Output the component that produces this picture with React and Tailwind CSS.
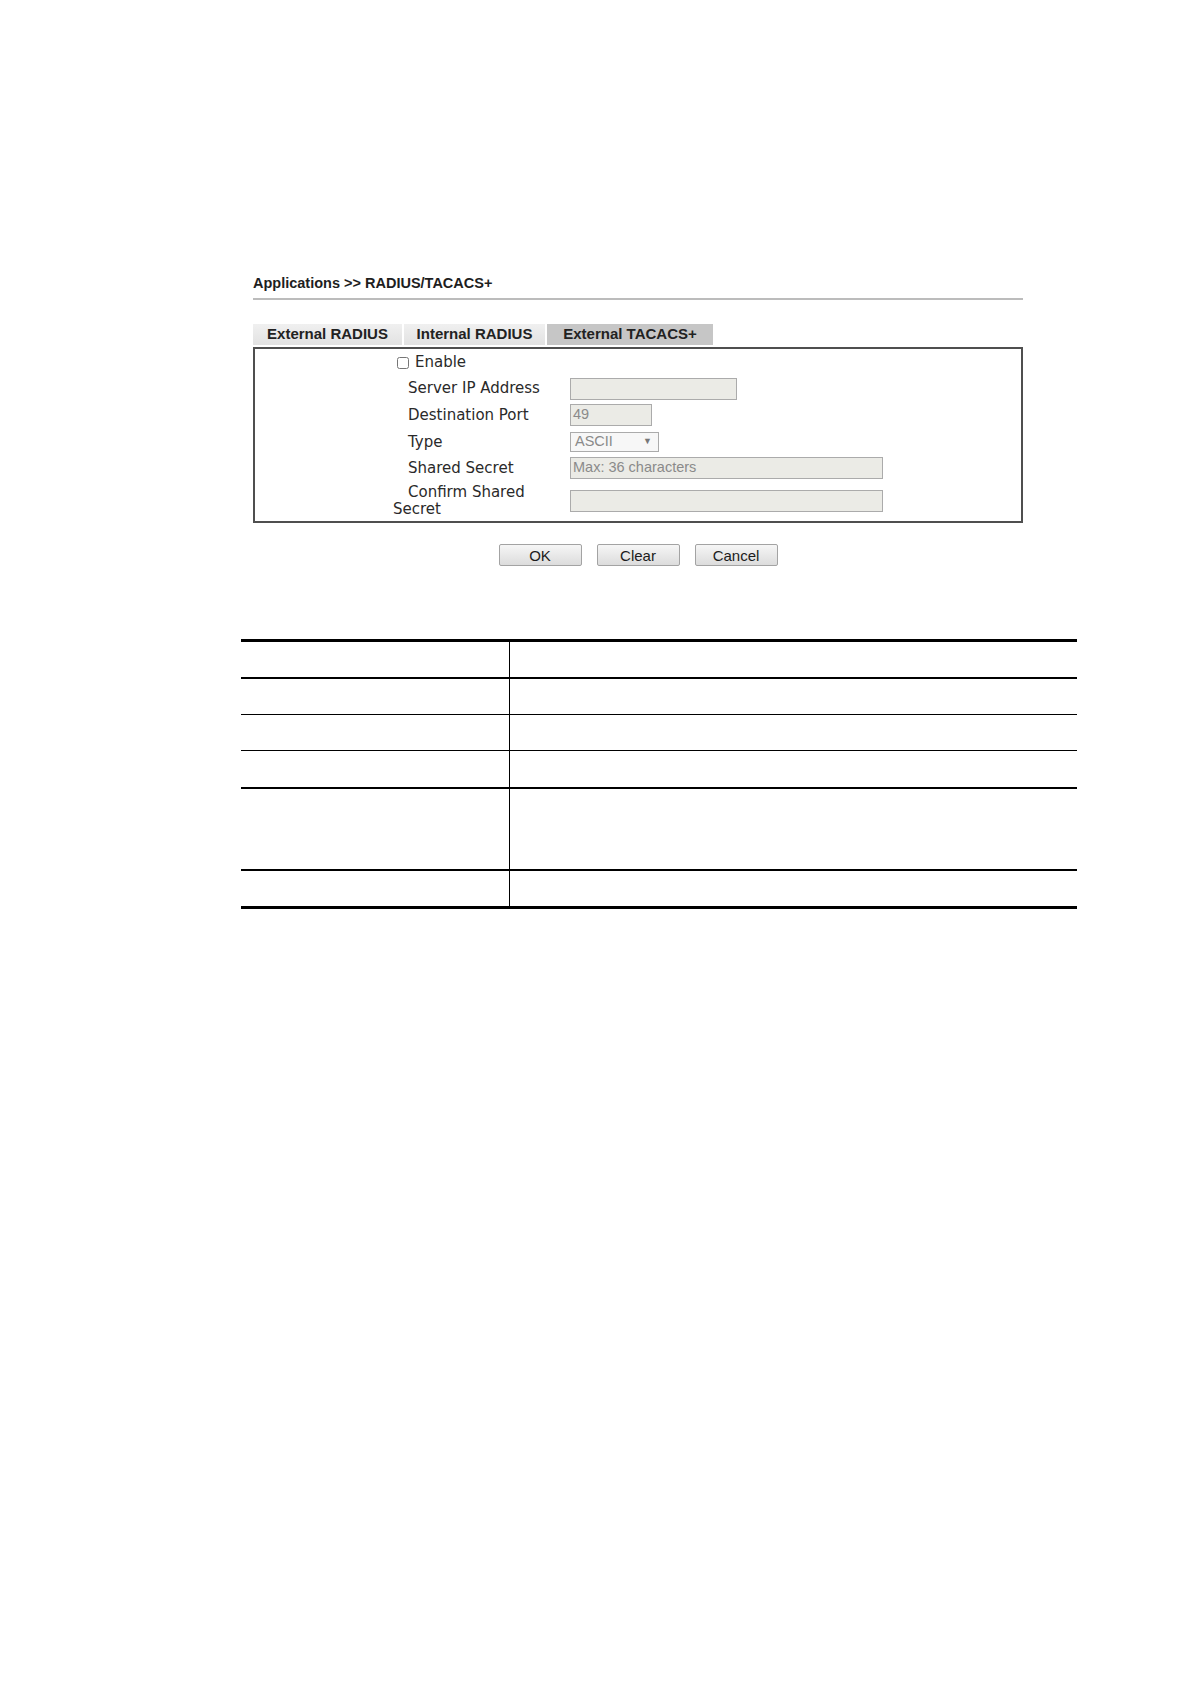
import { useState } from 'react'

const tabs = [
  { name: 'External RADIUS', w: 'w-[149px]', active: false },
  { name: 'Internal RADIUS', w: 'w-[141px]', active: false },
  { name: 'External TACACS+', w: 'w-[166px]', active: true },
]

// rows of the empty description table below the form
const tableRows = ['h-[37px]', 'h-[36px]', 'h-[36px]', 'h-[38px]', 'h-[82px]', 'h-[35px]']

function Field({ width, value, placeholder }) {
  return (
    <div
      className={`${width} h-[22px] border border-[#ababab] bg-[#ebebe6] px-[2px] flex items-center text-[14.5px] text-[#8a8a8a] font-['Liberation_Sans',Arial,sans-serif]`}
    >
      {value || placeholder || ''}
    </div>
  )
}

function App() {
  const [enabled, setEnabled] = useState(false)

  return (
    <div className="min-h-screen bg-white text-[#222]">
      <div className="ml-[253px] w-[770px] pt-[274px]">
        {/* breadcrumb */}
        <div className="h-[18px] leading-[18px] text-[14.5px] font-bold font-['Liberation_Sans',Arial,sans-serif] text-[#1e1e1e]">
          Applications &gt;&gt; RADIUS/TACACS+
        </div>
        <div className="mt-[6px] h-[2px] bg-[#bcbcbc]" />

        {/* tabs */}
        <div className="mt-[24px] flex gap-[2px] h-[21px]">
          {tabs.map(t => (
            <div
              key={t.name}
              className={`${t.w} h-full flex items-center justify-center text-[15px] font-bold font-['Liberation_Sans',Arial,sans-serif] text-[#222] ${
                t.active ? 'bg-[#c6c6c6]' : 'bg-gradient-to-b from-[#f0f0f0] to-[#e2e2e2]'
              }`}
            >
              {t.name}
            </div>
          ))}
        </div>

        {/* form box */}
        <div className="mt-[2px] h-[176px] border-2 border-[#4f4f4f] font-['DejaVu_Sans',Verdana,sans-serif] text-[15px] text-[#2a2a2a]">
          <div className="h-[27px] flex items-center pl-[142px]">
            <input
              type="checkbox"
              checked={enabled}
              onChange={e => setEnabled(e.target.checked)}
              className="m-0 w-[12px] h-[12px]"
            />
            <span className="ml-[6px]">Enable</span>
          </div>
          <div className="h-[25px] flex items-center">
            <div className="w-[315px] pl-[153px]">Server IP Address</div>
            <Field width="w-[167px]" />
          </div>
          <div className="h-[28px] flex items-center">
            <div className="w-[315px] pl-[153px]">Destination Port</div>
            <Field width="w-[82px]" value="49" />
          </div>
          <div className="h-[26px] flex items-center">
            <div className="w-[315px] pl-[153px]">Type</div>
            <div className="w-[89px] h-[20px] border border-[#ababab] bg-[#f7f7f7] pl-[4px] pr-[6px] flex items-center justify-between text-[14.5px] text-[#8a8a8a] font-['Liberation_Sans',Arial,sans-serif]">
              <span>ASCII</span>
              <span className="text-[9px] text-[#777]">▼</span>
            </div>
          </div>
          <div className="h-[26px] flex items-center">
            <div className="w-[315px] pl-[153px]">Shared Secret</div>
            <Field width="w-[313px]" placeholder="Max: 36 characters" />
          </div>
          <div className="h-[40px] flex items-center">
            <div className="w-[315px] pl-[138px] leading-[17px]">
              <span className="pl-[15px]">Confirm Shared</span>
              <br />
              Secret
            </div>
            <Field width="w-[313px]" />
          </div>
        </div>

        {/* buttons */}
        <div className="mt-[21px] flex justify-center gap-[15px] font-['Liberation_Sans',Arial,sans-serif] text-[15px]">
          {['OK', 'Clear', 'Cancel'].map(b => (
            <button
              key={b}
              className="w-[83px] h-[22px] border border-[#a3a3a3] rounded-[2px] bg-gradient-to-b from-[#f6f6f6] to-[#dcdcdc] text-[#1c1c1c] leading-none"
            >
              {b}
            </button>
          ))}
        </div>
      </div>

      {/* description table */}
      <div className="ml-[241px] mt-[73px] w-[836px] border-t-[3px] border-b-[3px] border-black">
        {tableRows.map((h, i) => (
          <div
            key={i}
            className={`${h} flex ${
              i === 0 || i === 3 || i === 4 ? 'border-b-2' : i === 5 ? '' : 'border-b'
            } border-black`}
          >
            <div className="w-[269px] border-r border-black" />
            <div className="flex-1" />
          </div>
        ))}
      </div>
    </div>
  )
}

export default App
